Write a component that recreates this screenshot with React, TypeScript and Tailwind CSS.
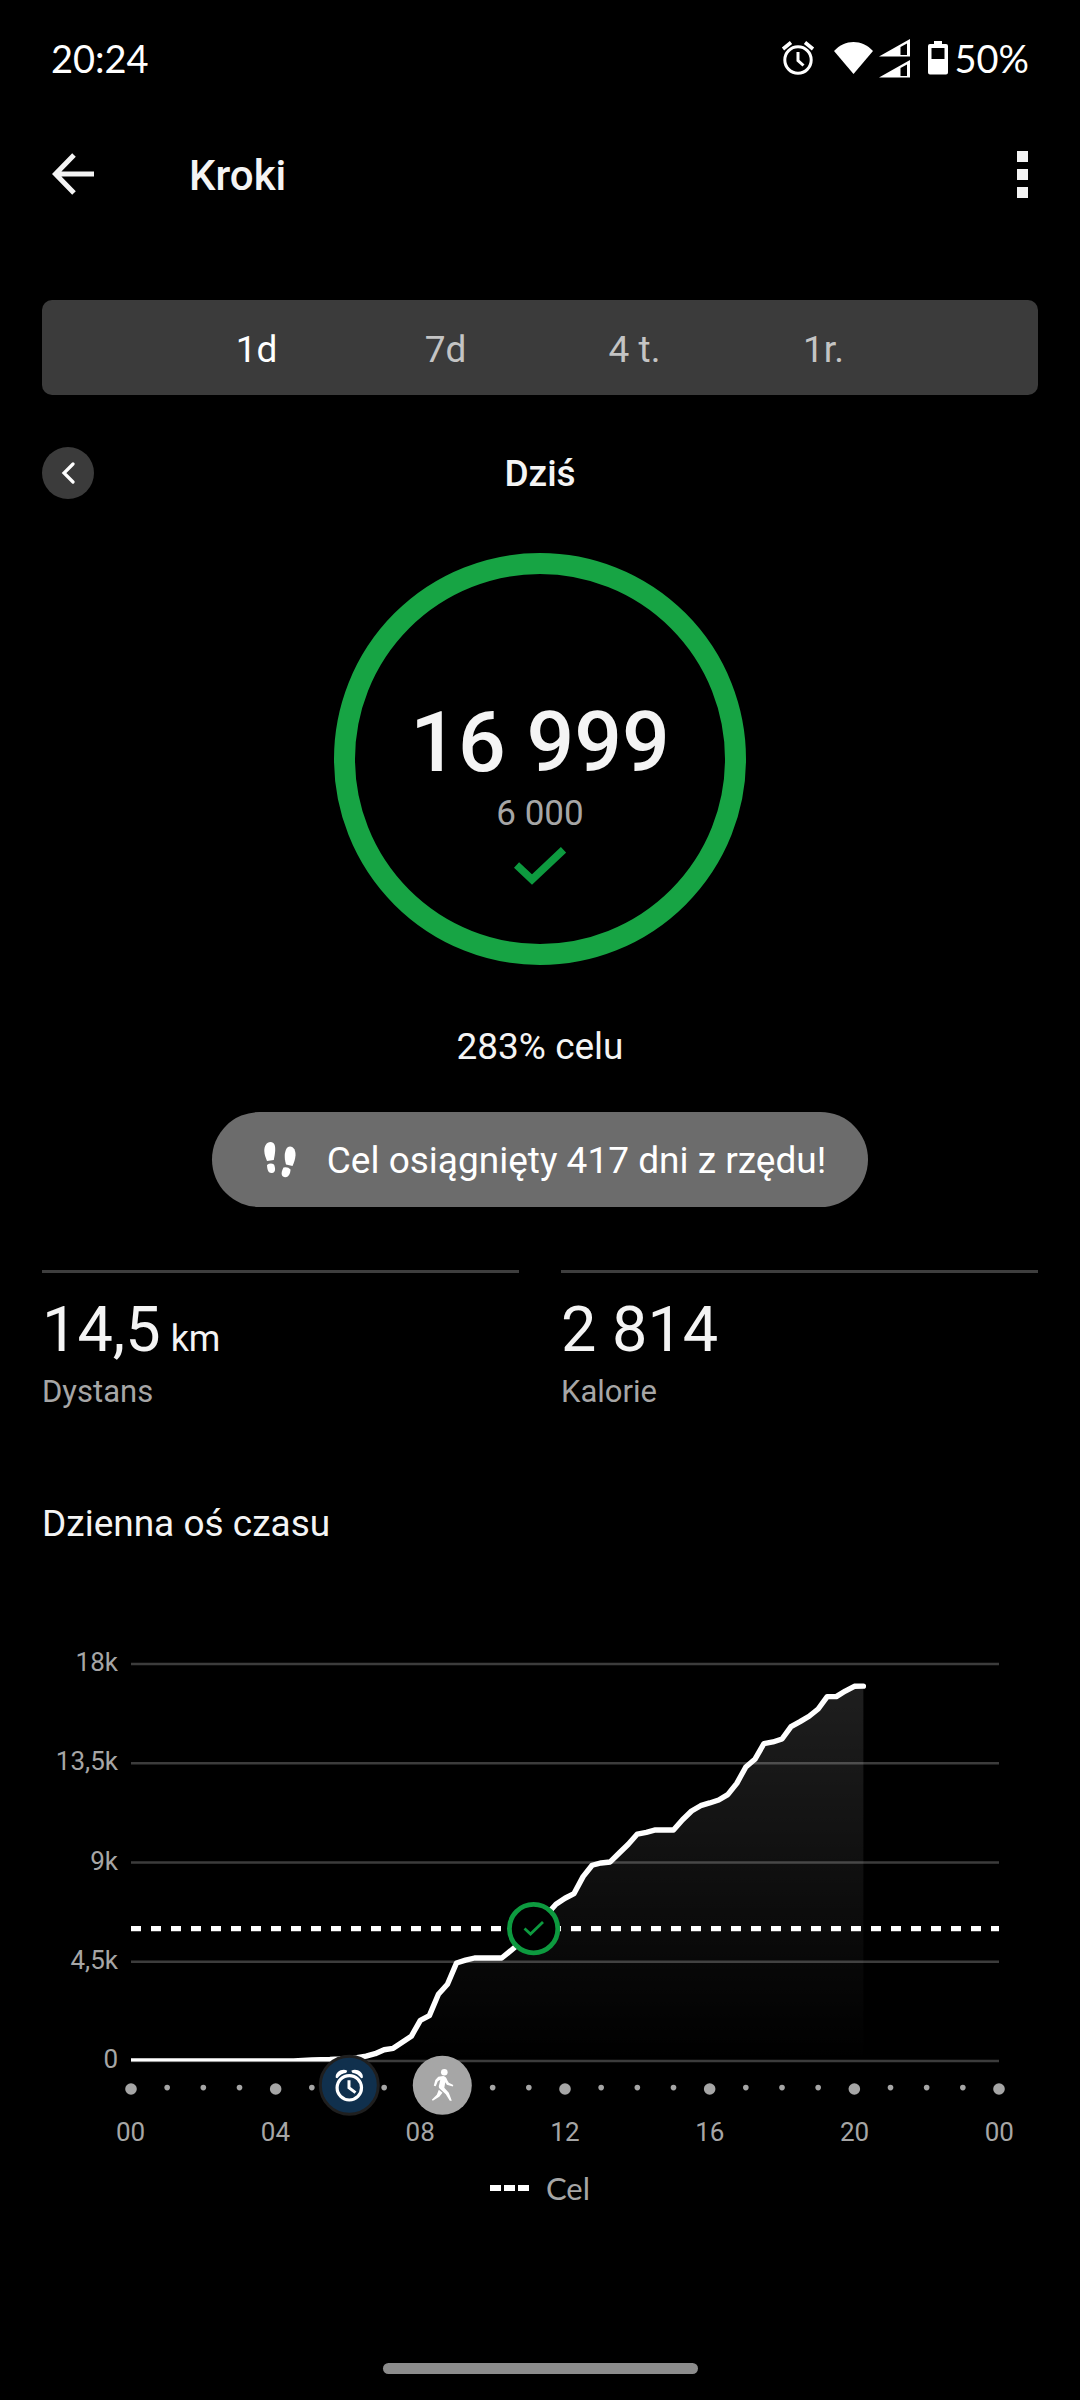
import { useState } from 'react';

const RANGES = ['1d', '7d', '4 t.', '1r.'];
const Y_LABELS = ['18k', '13,5k', '9k', '4,5k', '0'];
const X_LABELS = ['00', '04', '08', '12', '16', '20', '00'];

const GOAL = 6000;
const MAX_STEPS = 18000;

// cumulative steps, one sample every 15 minutes
const STEPS = [
  0, 0, 0, 0, 0, 0, 0, 0, 0, 0, 0, 0, 0, 0, 0, 0, 0, 0, 0, 30, 50, 60, 70, 90, 120, 150, 220, 330, 510, 575,
  850, 1120, 1845, 2055, 3025, 3480, 4445, 4570, 4670, 4670, 4670, 4670, 5000, 5350, 5750, 6200, 6650,
  7105, 7380, 7590, 8360, 8875, 8980, 9025, 9430, 9825, 10290, 10370, 10475, 10475, 10475, 10940, 11335,
  11575, 11700, 11835, 12075, 12590, 13330, 13680, 14390, 14465, 14600, 15160, 15385, 15630, 15960,
  16520, 16520, 16775, 16990, 16999,
];

// chart geometry, in viewBox units
const W = 868;
const TOP = 18;
const BOTTOM = 415;

const xAt = (quarter: number) => (quarter * W) / 96;
const yAt = (steps: number) => BOTTOM - (steps / MAX_STEPS) * (BOTTOM - TOP);

function StatusBar() {
  return (
    <div className="flex h-[116px] items-center justify-between px-[51px] font-['Lato',sans-serif] text-[38px] text-white">
      <span>20:24</span>
      <div className="flex items-center">
        <svg className="mr-[19px] h-[34px] w-[34px]" viewBox="0 0 34 34" fill="none" stroke="white">
          <circle cx="17" cy="19" r="13.2" strokeWidth="3" />
          <path d="M17 11v8.5l5.5 5" strokeWidth="3" />
          <path d="M2 8l8-6.5M32 8l-8-6.5" strokeWidth="3.6" />
        </svg>
        <svg className="mr-[6px] h-[32px] w-[39px]" viewBox="0 0 39 32" fill="white">
          <path d="M0 9C11-3 28-3 39 9L19.5 32z" />
        </svg>
        <svg className="mr-[18px] h-[39px] w-[31px]" viewBox="0 0 31 39" fill="white" fillRule="evenodd">
          <path d="M0 17.5L31 0v17.500zM21.5 8v8H28V4.5z" />
          <path d="M0 38.5L31 21v17.500zM21.5 29v8H28V25.5z" />
        </svg>
        <svg className="mr-[6px] h-[34px] w-[20px]" viewBox="0 0 20 34" fill="white" fillRule="evenodd">
          <path d="M6 0h8v3h4a2 2 0 0 1 2 2v26.500a2 2 0 0 1-2 2H2a2 2 0 0 1-2-2V5a2 2 0 0 1 2-2h4zM3.5 7v11h13V7z" />
        </svg>
        <span>50%</span>
      </div>
    </div>
  );
}

function AppBar() {
  return (
    <header className="flex h-[116px] items-center px-[52px]">
      <button aria-label="Wstecz">
        <svg className="h-[42px] w-[42px]" viewBox="0 0 42 42" fill="none" stroke="#f4f4f4" strokeWidth="5">
          <path d="M22 2L3.5 21L22 40M4 21h38" />
        </svg>
      </button>
      <h1 className="ml-[95px] pt-[2px] text-[42px] font-medium">Kroki</h1>
      <button aria-label="Więcej opcji" className="ml-auto flex flex-col gap-[7px]">
        <span className="h-[11px] w-[11px] bg-[#f4f4f4]" />
        <span className="h-[11px] w-[11px] bg-[#f4f4f4]" />
        <span className="h-[11px] w-[11px] bg-[#f4f4f4]" />
      </button>
    </header>
  );
}

function Stat({ value, unit, label }: { value: string; unit?: string; label: string }) {
  return (
    <div className="flex-1 border-t-[3px] border-[#3e3e3e] pt-[25px]">
      <p className="text-[63px] leading-[64px]">
        {value}
        {unit && <span className="ml-[10px] text-[36px] leading-none">{unit}</span>}
      </p>
      <p className="mt-[10px] text-[31px] leading-[40px] text-[#a6a6a6]">{label}</p>
    </div>
  );
}

function TimelineChart() {
  const points = STEPS.map((s, i) => `${xAt(i)},${yAt(s)}`).join(' ');
  const lastX = xAt(STEPS.length - 1);
  const hours = Array.from({ length: 25 }, (_, h) => h);

  return (
    <svg className="min-w-0 flex-1 overflow-visible" viewBox="0 0 868 470" role="img" aria-label="Dzienna oś czasu">
      <defs>
        <linearGradient id="area" x1="0" y1="0" x2="0" y2="1">
          <stop offset="0" stopColor="white" stopOpacity="0.12" />
          <stop offset="1" stopColor="white" stopOpacity="0" />
        </linearGradient>
        <clipPath id="plot">
          <rect x="0" y="0" width={W + 10} height={BOTTOM + 0.5} />
        </clipPath>
      </defs>

      {[0, 4500, 9000, 13500, 18000].map((v) => (
        <line key={v} x1="0" x2={W} y1={yAt(v)} y2={yAt(v)} stroke="#3c3c3c" strokeWidth="2.6" />
      ))}
      <polygon points={`0,${BOTTOM} ${points} ${lastX},${BOTTOM}`} fill="url(#area)" />
      <line
        x1="0"
        x2={W}
        y1={yAt(GOAL)}
        y2={yAt(GOAL)}
        stroke="white"
        strokeWidth="5.4"
        strokeDasharray="10 10"
      />
      <polyline
        points={points}
        fill="none"
        stroke="white"
        strokeWidth="5.4"
        strokeLinejoin="round"
        strokeLinecap="round"
        clipPath="url(#plot)"
      />

      {/* goal reached */}
      <circle cx="402.6" cy={yAt(GOAL)} r="24.2" fill="black" stroke="#0d9a3f" strokeWidth="4.8" />
      <path d="M393.5 282.5l6 5.500L412 276" fill="none" stroke="#0d9a3f" strokeWidth="2.8" />

      {hours.map((h) => (
        <circle
          key={h}
          cx={xAt(h * 4)}
          cy={h % 4 === 0 ? 443 : 441.6}
          r={h % 4 === 0 ? 5.8 : 2.8}
          fill="#a6a6a6"
        />
      ))}

      {/* alarm */}
      <circle cx="218.3" cy="439.3" r="29" fill="#10304d" stroke="#1f1f1f" strokeWidth="3" />
      <g transform="translate(218.3 441.8)" fill="none" stroke="white">
        <circle r="12.2" strokeWidth="3.2" />
        <path d="M-0.3-7.500v7.500l6.5 4.8" strokeWidth="3" />
        <path
          d="M-13.5-10C-14.5-16-6.500-20-2-17L-3-15C-7-14.500-9.500-12.500-12-9.500zM13.5-10C14.5-16 6.500-20 2-17L3-15C7-14.500 9.500-12.500 12-9.500z"
          fill="white"
          stroke="none"
        />
      </g>

      {/* walk */}
      <circle cx="311.3" cy="439.3" r="29.5" fill="#a6a6a6" />
      <g transform="translate(311.3 439.3)" fill="white">
        <circle cx="2" cy="-13" r="3.3" />
        <path d="M-4-8.500L1-9.200C3-9 4.2-7.500 5-5L6.5-2.500L11-0.200L10.5 1.2L4.5-0.500L3-3L2 2.500L6.5 7.500L9.5 15.500L7.5 15.500L3.5 9L-3 3C-3.8 1.8-3.500 0.5-3-1L-2-5.500L-4.500-4L-6.500 1L-8.500 0.5L-7-5.200z" />
        <path d="M-3.500 4.500L0.2 7.500L-3 11.500L-9.500 15.500L-10.500 14.500L-5.500 9.500z" />
      </g>
    </svg>
  );
}

export default function App() {
  const [range, setRange] = useState('1d');

  return (
    <div className="flex min-h-screen flex-col bg-black font-['Roboto',sans-serif] text-[#f4f4f4]">
      <StatusBar />
      <AppBar />

      <main className="mt-[68px] px-[42px]">
        <nav className="flex h-[95px] rounded-[10px] bg-[#3b3b3b] px-[120px] text-[37px]">
          {RANGES.map((r) => (
            <button
              key={r}
              onClick={() => setRange(r)}
              className={r === range ? 'flex-1 pt-[4px] text-white' : 'flex-1 pt-[4px] text-[#c4c4c4]'}
            >
              {r}
            </button>
          ))}
        </nav>

        <div className="mt-[52px] grid grid-cols-[52px_1fr_52px] items-center">
          <button
            aria-label="Poprzedni dzień"
            className="flex h-[52px] w-[52px] items-center justify-center rounded-full bg-[#3b3b3b]"
          >
            <svg
              className="h-[22px] w-[14px]"
              viewBox="0 0 14 22"
              fill="none"
              stroke="white"
              strokeWidth="3.2"
              strokeLinecap="round"
            >
              <path d="M12 2L3 11l9 9" />
            </svg>
          </button>
          <h2 className="pt-[2px] text-center text-[37px] font-medium leading-[50px]">Dziś</h2>
        </div>

        <div className="mx-auto mt-[54px] flex h-[412px] w-[412px] flex-col items-center rounded-full border-[21px] border-[#17a444] pt-[119px]">
          <p className="text-[84px] font-medium leading-[100px]">16 999</p>
          <p className="text-[35px] leading-[42px] text-[#a6a6a6]">6 000</p>
          <svg className="mt-[12px] h-[38px] w-[52px]" viewBox="0 0 52 38" fill="none" stroke="#0d9a3f" strokeWidth="7.6">
            <path d="M2.5 18L18 32.500L49.5 2.8" />
          </svg>
        </div>

        <p className="mt-[58px] text-center text-[37px] leading-[48px]">283% celu</p>

        <div className="mx-auto mt-[41px] flex h-[95px] w-fit items-center rounded-full bg-[#6c6c6c] px-[42px] text-[37px] text-white">
          <svg className="mx-[10px] h-[36px] w-[32px]" viewBox="0 0 32 36" fill="white">
            <path d="M6.5 0C10.5 0 11.5 4 11.2 8.500C11 12 10.3 15 9.8 18L3 19C1.5 15 0.5 13 0.3 9C0.2 4 2.5 0 6.5 0z" />
            <path d="M3 23Q6.500 20.5 10 22.500C11.5 26 12 30.500 8 31C3.5 31.5 3.2 26 3 23z" />
            <path d="M26 4.5C30 4.5 31.800 9 31.500 13.500C31.2 17.500 30 20.500 28.500 24L22 22.500C21 18.500 20.5 16 20.800 12C21.5 7.500 23 4.5 26 4.5z" />
            <path d="M19.5 25.500Q24 24.500 26.5 27.500C26.5 30.500 25 35.500 21 35.200C16 34.500 17.500 29 19.5 25.500z" />
          </svg>
          <span className="ml-[21px] pt-[2px]">Cel osiągnięty 417 dni z rzędu!</span>
        </div>

        <section className="mt-[63px] flex gap-[42px]">
          <Stat value="14,5" unit="km" label="Dystans" />
          <Stat value="2 814" label="Kalorie" />
        </section>

        <h3 className="mt-[88px] text-[37px] leading-[48px]">Dzienna oś czasu</h3>

        <div className="mt-[98px] flex items-start pr-[39px] text-[26px] leading-[32px] text-[#a6a6a6]">
          <div className="flex h-[429px] w-[89px] flex-col justify-between pr-[13px] text-right">
            {Y_LABELS.map((label) => (
              <span key={label}>{label}</span>
            ))}
          </div>
          <TimelineChart />
        </div>
        <div className="ml-[74px] mr-[24px] flex justify-between text-[26px] leading-[32px] text-[#a6a6a6]">
          {X_LABELS.map((label, i) => (
            <span key={i}>{label}</span>
          ))}
        </div>

        <div className="mt-[20px] flex items-center justify-center gap-[17px] font-['Lato',sans-serif] text-[31px] leading-[40px] text-[#a6a6a6]">
          <div className="flex gap-[3px]">
            <span className="h-[6px] w-[11px] bg-white" />
            <span className="h-[6px] w-[11px] bg-white" />
            <span className="h-[6px] w-[11px] bg-white" />
          </div>
          Cel
        </div>
      </main>

      <div className="mx-auto mb-[26px] mt-auto h-[11px] w-[315px] rounded-full bg-[#8c8c8c]" />
    </div>
  );
}
